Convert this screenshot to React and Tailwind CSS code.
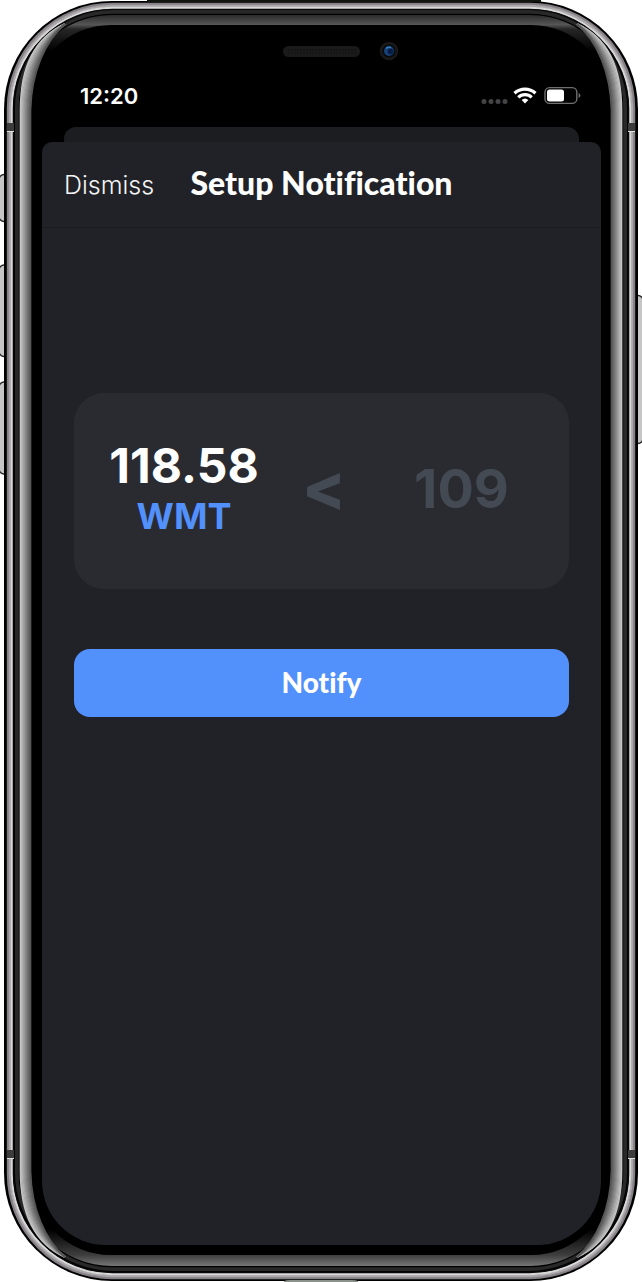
import React from "react";

const BEVEL = ["#c6c6c6", "#bebebe", "#b2b2b2", "#a8a8a8", "#9c9c9c", "#909090", "#848484", "#787878", "#6e6e6e", "#646464", "#565656"];

function SideBevel() {
  return (
    <g fill="none" strokeWidth="1.7">
      {BEVEL.map((color, i) => {
        const x = 20.5 + i;
        const t = i / 10;
        const ax = 20.5 + 11 * t;
        const ay = 66 + 6 * t;
        const bx = 36 + 9 * t;
        const by = 37 + 4 * t;
        return (
          <path
            key={color}
            stroke={color}
            d={`M65 24 C${bx} ${by} ${ax} ${ay} ${x} 110 V1171 C${ax} ${1281 - ay} ${bx} ${1281 - by} 65 1257`}
          />
        );
      })}
    </g>
  );
}

function SideDetails() {
  return (
    <g>
      <SideBevel />
      <rect x="7" y="123" width="7" height="8" fill="#3c3c3c" />
      <rect x="7" y="131" width="7" height="1" fill="#dedede" />
      <rect x="7" y="1150" width="7" height="8" fill="#3c3c3c" />
      <rect x="7" y="1158" width="7" height="1" fill="#dedede" />
    </g>
  );
}

function DeviceFrame() {
  return (
    <svg
      aria-hidden="true"
      className="absolute inset-0 h-full w-full"
      viewBox="0 0 642 1282"
      preserveAspectRatio="none"
    >
      <defs>
        <linearGradient id="bevel" x1="0" x2="0" y1="14" y2="1267" gradientUnits="userSpaceOnUse">
          <stop offset="0" stopColor="#262626" />
          <stop offset="0.0085" stopColor="#565656" />
          <stop offset="0.012" stopColor="#262626" />
          <stop offset="0.03" stopColor="#000" />
          <stop offset="0.97" stopColor="#000" />
          <stop offset="0.9905" stopColor="#3e3e3e" />
          <stop offset="1" stopColor="#7c7c7c" />
        </linearGradient>
      </defs>

      <g fill="#c6c6c6" stroke="#242424" strokeWidth="1.4">
        <rect x="-1" y="174.5" width="12" height="47" rx="5" />
        <rect x="-1" y="265" width="12" height="91.5" rx="5" />
        <rect x="-1" y="382" width="12" height="92" rx="5" />
        <rect x="631" y="295.5" width="12" height="148" rx="5" />
      </g>

      <rect x="4" y="1" width="634" height="1280" rx="108" fill="#000" />
      <rect x="147" width="394" height="2" fill="#101510" />
      <g fill="none">
        <rect x="8" y="4" width="626" height="1274" rx="104" stroke="#858085" strokeWidth="2.4" />
        <rect x="10" y="6" width="622" height="1270" rx="102" stroke="#aaa6aa" strokeWidth="2.4" />
        <rect x="12" y="8" width="618" height="1266" rx="100" stroke="#d8d8d8" strokeWidth="2.4" />
        <rect x="13.5" y="9.5" width="615" height="1263" rx="99" stroke="#080808" strokeWidth="1.5" />
        <rect x="17" y="12" width="608" height="1257" rx="96" stroke="#282828" strokeWidth="4" />
        <rect x="19.5" y="14.5" width="603" height="1252" rx="93" stroke="#000" strokeWidth="1.5" />
      </g>
      <rect x="20" y="15" width="602" height="1251" rx="92" fill="url(#bevel)" />
      <rect x="31" y="25" width="580" height="1230" rx="80" fill="#000" />
      <SideDetails />
      <g transform="translate(642 0) scale(-1 1)">
        <SideDetails />
      </g>
      <path d="M284 1281 Q286 1280 290 1280 H352 Q356 1280 358 1281 V1282 H284 Z" fill="#8b918b" />

      <rect x="283" y="46" width="77" height="11" rx="5.5" fill="#1a1a1a" />
      <path d="M288 50 H356 M288 53 H356" stroke="#101010" strokeWidth="1" strokeDasharray="2 1" />
      <circle cx="389" cy="51" r="9.3" fill="#191919" />
      <circle cx="389" cy="51" r="6.6" fill="#080a0e" />
      <circle cx="389" cy="51" r="5" fill="#164276" />
      <circle cx="390.5" cy="51.5" r="2.8" fill="#0a1c46" />
      <path d="M386 48.5 Q388 46.5 391 47.5" stroke="#3b84c4" strokeWidth="1.3" fill="none" />
    </svg>
  );
}

function StatusBar() {
  return (
    <div className="flex h-[34px] items-center justify-between pr-5 pl-[38px] text-white">
      <time className="text-[22px] leading-[34px] font-semibold">12:20</time>
      <svg role="img" aria-label="Wi-Fi connected, battery at 60 percent" width="102" height="20" viewBox="0 0 102 20">
        <g fill="#444446">
          <circle cx="5" cy="15.5" r="2.5" />
          <circle cx="12" cy="15.5" r="2.5" />
          <circle cx="19" cy="15.5" r="2.5" />
          <circle cx="26" cy="15.5" r="2.5" />
        </g>
        <g fill="none" stroke="#fff" strokeWidth="3.2">
          <path d="M35.5 7.2 A15.5 15.5 0 0 1 56.5 7.2" />
          <path d="M39.3 11.3 A9.7 9.7 0 0 1 52.7 11.3" />
        </g>
        <path d="M42.6 14 A5 5 0 0 1 49.4 14 L46 17.6 Z" fill="#fff" />
        <rect x="66" y="1.6" width="31.8" height="15.8" rx="4.5" fill="none" stroke="#6f6f71" strokeWidth="1.4" />
        <rect x="68" y="3.6" width="17" height="11.8" rx="2.5" fill="#fff" />
        <path d="M99.6 7 Q101.4 7.6 101.4 9.5 Q101.4 11.4 99.6 12 Z" fill="#6f6f71" />
      </svg>
    </div>
  );
}

export default function App() {
  return (
    <div className="min-h-screen bg-white font-['Inter',sans-serif]">
      <div className="relative mx-auto flex min-h-screen w-full max-w-[642px] flex-col pt-[79px] pr-[41px] pb-[37px] pl-[42px]">
        <DeviceFrame />
        <div className="relative flex flex-1 flex-col">
          <StatusBar />
          <div className="mx-[22px] mt-[14px] h-[15px] rounded-t-xl bg-[#1c1d21]" />
          <main className="flex flex-1 flex-col rounded-t-[10px] rounded-b-[64px] bg-[#212227]">
            <header className="grid h-[86px] grid-cols-[1fr_auto_1fr] items-center border-b border-[#1b1c20] px-[22px]">
              <button type="button" className="justify-self-start text-[25px] leading-8 font-light text-[#f4f4f5]">
                Dismiss
              </button>
              <h1 className="pb-[3px] font-['Lato',sans-serif] text-[32px] leading-9 font-black text-white [font-variant-ligatures:none]">
                Setup Notification
              </h1>
            </header>

            <form className="flex flex-col gap-[60px] px-8 pt-[165px]" onSubmit={(e) => e.preventDefault()}>
              <section className="grid h-[196px] grid-cols-[156px_36px_1fr] items-center gap-x-10 rounded-[30px] bg-[#2a2b30] pr-6 pl-8">
                <div className="flex flex-col items-center">
                  <span className="text-[48px] leading-[50px] font-bold text-white">118.58</span>
                  <span className="text-[36px] leading-[50px] font-bold text-[#5290fb]">WMT</span>
                </div>
                <span className="pb-2 text-center text-[64px] leading-[60px] font-extrabold text-[#434a53]">&lt;</span>
                <input
                  aria-label="Target price"
                  inputMode="decimal"
                  placeholder="109"
                  className="w-full min-w-0 bg-transparent pb-1 text-center text-[54px] leading-[60px] font-bold text-white outline-none placeholder:text-[#434a53]"
                />
              </section>
              <button
                type="submit"
                className="h-[68px] rounded-2xl bg-[#5290fb] pb-[2px] font-['Lato',sans-serif] text-[28px] leading-9 font-black text-white [font-variant-ligatures:none]"
              >
                Notify
              </button>
            </form>
          </main>
        </div>
      </div>
    </div>
  );
}
